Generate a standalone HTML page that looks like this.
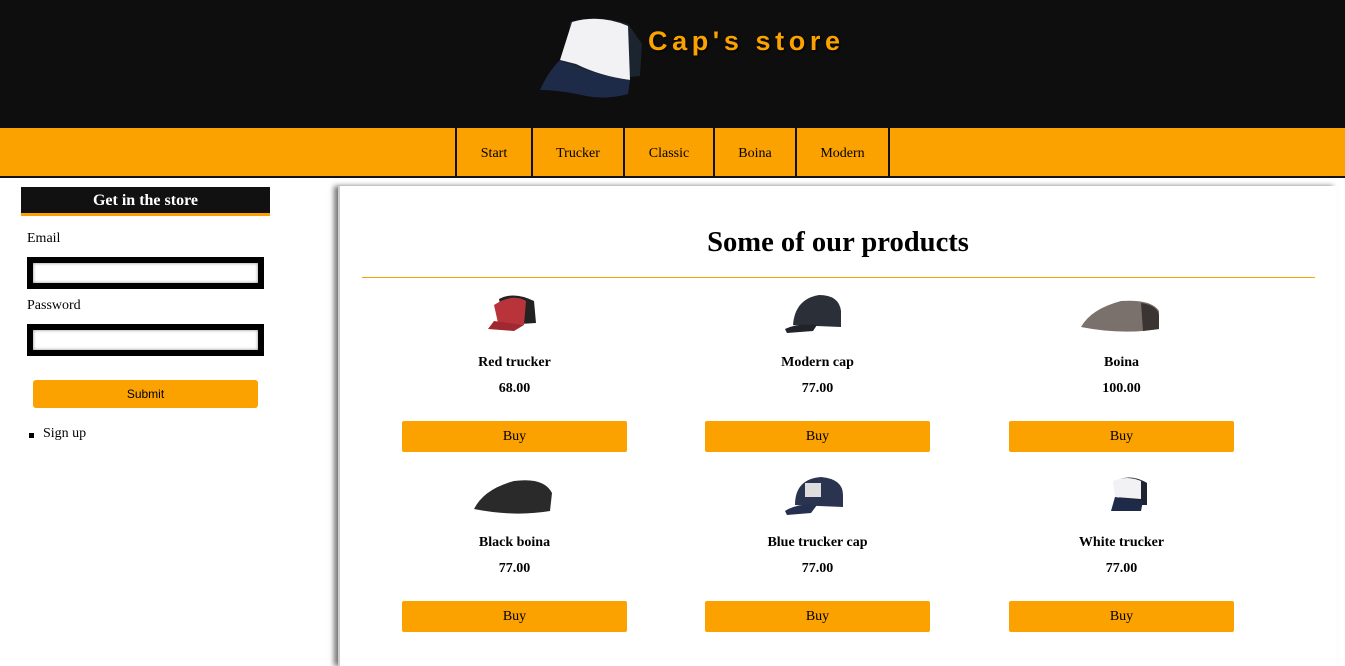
<!DOCTYPE html>
<html><head><style>
body{margin:0;width:1345px;height:659px;overflow:hidden;background:#fff;font-family:"Liberation Serif",serif;position:relative}
.hdr{position:absolute;left:0;top:0;width:1345px;height:128px;background:#0e0e0e}
.title{position:absolute;left:648px;top:26px;color:#fba200;font-family:"Liberation Sans",sans-serif;font-size:27px;letter-spacing:4.6px;font-weight:bold;text-shadow:1px 1px 2px #000}
.nav{position:absolute;left:0;top:128px;width:1345px;height:48px;background:#fba200;border-bottom:2px solid #111}
.nav div{position:absolute;top:0;height:48px;line-height:51px;font-size:14px;text-align:center;border-left:2px solid #111}
.side-h{position:absolute;left:21px;top:187px;width:249px;height:26px;background:#111;border-bottom:3px solid #fba200;color:#fff;font-weight:bold;font-size:16px;text-align:center;line-height:28px}
.lbl{position:absolute;left:27px;font-size:14px}
.inp{position:absolute;left:27px;width:225px;height:20px;border:6px solid #000;box-shadow:inset 0 0 3px #888}
.sub{position:absolute;left:33px;top:380px;width:225px;height:28px;background:#fba200;border-radius:3px;font-family:"Liberation Sans",sans-serif;font-size:12px;text-align:center;line-height:28px}
.panel{position:absolute;left:338px;top:186px;width:997px;height:480px;background:#fff;box-shadow:-4px 0 5px #777;border-left:2px solid #ccc}
h1{position:absolute;left:338px;width:1000px;top:227px;margin:0;text-align:center;font-size:28.6px;z-index:2}
.line{position:absolute;left:362px;top:277px;width:953px;height:1px;background:#fba200;z-index:3}
.p{position:absolute;width:225px;text-align:center;font-size:14px}
.p .n{position:absolute;top:0;width:100%;font-weight:bold}
.p .pr{position:absolute;top:26px;width:100%;font-weight:bold}
.p .b{position:absolute;top:66px;width:225px;height:31px;background:#fba200;border-radius:2px;line-height:31px}
.p svg{position:absolute;top:-64px;left:72px}
</style></head><body>
<div class="hdr">
<svg style="position:absolute;left:536px;top:14px" width="110" height="90" viewBox="0 0 110 90">
<path d="M34 8 Q62 0 92 10 L106 30 L104 62 L60 66 L30 52 Z" fill="#1c2430"/>
<path d="M36 8 Q64 0 92 12 L94 66 Q64 62 40 50 L24 46 Z" fill="#f2f2f4"/>
<path d="M24 46 Q60 62 94 66 L92 80 Q70 86 50 82 Q24 76 4 76 Q12 58 24 46Z" fill="#1e2b48"/>
</svg>
<div class="title">Cap's store</div>
</div>
<div class="nav">
<div style="left:455px;width:74px">Start</div>
<div style="left:531px;width:90px">Trucker</div>
<div style="left:623px;width:88px">Classic</div>
<div style="left:713px;width:80px">Boina</div>
<div style="left:795px;width:91px">Modern</div>
<div style="left:888px;width:0"></div>
</div>
<div class="side-h">Get in the store</div>
<div class="lbl" style="top:231px">Email</div>
<div class="inp" style="top:257px"></div>
<div class="lbl" style="top:298px">Password</div>
<div class="inp" style="top:324px"></div>
<div class="sub">Submit</div>
<div style="position:absolute;left:29px;top:433px;width:5px;height:5px;background:#000"></div>
<div class="lbl" style="left:43px;top:426px">Sign up</div>
<div class="panel"></div>
<h1>Some of our products</h1>
<div class="line"></div>

<div class="p" style="left:402px;top:355px"><svg width="80" height="44" viewBox="0 0 80 44"><path d="M25 8 Q40 0 60 10 L62 32 L30 34 Z" fill="#222"/><path d="M20 14 Q38 2 52 10 L50 34 L24 32 Z" fill="#b8343a"/><path d="M20 30 L50 34 L40 40 L14 38Z" fill="#a02830"/></svg><div class="n">Red trucker</div><div class="pr">68.00</div><div class="b">Buy</div></div>
<div class="p" style="left:705px;top:355px"><svg width="80" height="44" viewBox="0 0 80 44"><path d="M16 34 Q18 8 42 4 Q62 4 64 20 L64 36 Z" fill="#2b2f38"/><path d="M8 38 Q20 32 40 34 L36 40 L10 42Z" fill="#20232a"/></svg><div class="n">Modern cap</div><div class="pr">77.00</div><div class="b">Buy</div></div>
<div class="p" style="left:1009px;top:355px"><svg width="80" height="44" viewBox="0 0 80 44"><path d="M0 36 Q10 18 40 10 Q70 8 78 20 L78 38 Q40 44 0 36Z" fill="#7a716c"/><path d="M60 12 Q76 14 78 24 L78 38 L62 40Z" fill="#3a3432"/></svg><div class="n">Boina</div><div class="pr">100.00</div><div class="b">Buy</div></div>

<div class="p" style="left:402px;top:535px"><svg width="80" height="44" viewBox="0 0 80 44"><path d="M0 38 Q10 18 40 10 Q70 6 78 22 L76 40 Q40 46 0 38Z" fill="#2a2a2a"/></svg><div class="n">Black boina</div><div class="pr">77.00</div><div class="b">Buy</div></div>
<div class="p" style="left:705px;top:535px"><svg width="80" height="44" viewBox="0 0 80 44"><path d="M18 34 Q18 8 44 6 Q66 8 66 24 L66 36 Z" fill="#2a3450"/><rect x="28" y="12" width="16" height="14" fill="#ddd"/><path d="M8 40 Q20 32 40 34 L34 42 L10 44Z" fill="#253050"/></svg><div class="n">Blue trucker cap</div><div class="pr">77.00</div><div class="b">Buy</div></div>
<div class="p" style="left:1009px;top:535px"><svg width="80" height="44" viewBox="0 0 80 44"><path d="M34 10 Q50 2 66 12 L66 34 L40 34Z" fill="#1e2430"/><path d="M32 10 Q46 4 60 10 L60 28 L34 26Z" fill="#f2f2f4"/><path d="M34 26 L62 30 L60 40 L30 40 Z" fill="#1e2b48"/></svg><div class="n">White trucker</div><div class="pr">77.00</div><div class="b">Buy</div></div>
</body></html>
